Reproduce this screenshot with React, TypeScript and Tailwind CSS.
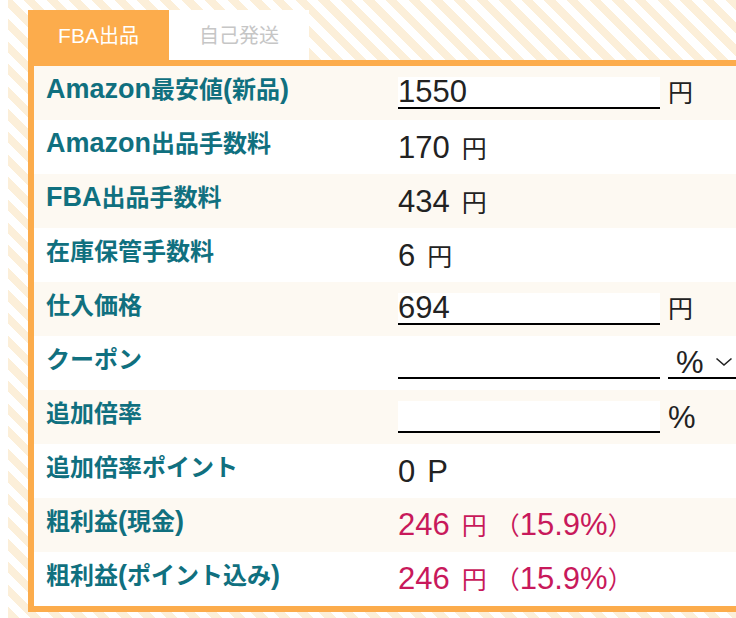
import React from "react";

const CJK_RE = /([\u3000-\u30ff\u4e00-\u9fff\uff00-\uffef]+)/;
const IS_CJK = /^[\u3000-\u30ff\u4e00-\u9fff\uff00-\uffef]+$/;

function Mix({ text, latin, cjk }: { text: string; latin: string; cjk: string }) {
  const parts = text.split(CJK_RE).filter((p) => p.length > 0);
  return (
    <>
      {parts.map((p, i) => (
        <span key={i} className={IS_CJK.test(p) ? cjk : latin}>
          {p}
        </span>
      ))}
    </>
  );
}

const LAT = "font-['Liberation_Sans',sans-serif] text-[31px] leading-none";
const JP = "font-['Noto_Sans_CJK_JP',sans-serif] text-[25px] leading-none";

function Label({ text }: { text: string }) {
  return (
    <div className="w-[364px] shrink-0 pl-[12px] pb-[6px] font-bold text-[#10707f] whitespace-nowrap">
      <Mix
        text={text}
        latin="font-['Liberation_Sans',sans-serif] text-[27px] leading-none"
        cjk="font-['Noto_Sans_CJK_JP',sans-serif] text-[24px] leading-none"
      />
    </div>
  );
}

function Input({ value }: { value: string }) {
  return (
    <input
      defaultValue={value}
      className="w-[262px] h-[32px] shrink-0 bg-white border-b-2 border-black outline-none p-0 text-[31px] leading-none font-['Liberation_Sans',sans-serif] text-[#222]"
    />
  );
}

function Plain({ num, unit, extra, red }: { num: string; unit: string; extra?: string; red?: boolean }) {
  return (
    <div className={"flex items-baseline whitespace-nowrap " + (red ? "text-[#c8195b]" : "text-[#222]")}>
      <span className={LAT}>{num}</span>
      <span className={"ml-[12px] " + (IS_CJK.test(unit) ? JP : LAT)}>{unit}</span>
      {extra && (
        <span className="ml-[8px]">
          <Mix text={extra} latin={LAT} cjk={JP} />
        </span>
      )}
    </div>
  );
}

function Row({ label, odd, children }: { label: string; odd: boolean; children: React.ReactNode }) {
  return (
    <div className={"flex items-center h-[54px] " + (odd ? "bg-[#fdf9f2]" : "bg-white")}>
      <Label text={label} />
      <div className="flex items-center">{children}</div>
    </div>
  );
}

export default function App() {
  return (
    <div className="w-[736px] h-[618px] overflow-hidden bg-white">
      <div className="ml-[8px] h-[618px] pl-[20px] pt-[10px] bg-[repeating-linear-gradient(45deg,#fcefd9_0px,#fcefd9_8px,#ffffff_8px,#ffffff_16px)]">
        <div className="flex">
          <div className="w-[141px] h-[50px] bg-[#fcac4c] text-white flex items-center justify-center">
            <Mix
              text="FBA出品"
              latin="font-['Liberation_Sans',sans-serif] text-[21px] leading-none"
              cjk="font-['Noto_Sans_CJK_JP',sans-serif] text-[20px] leading-none"
            />
          </div>
          <div className="w-[140px] h-[50px] bg-white text-[#c6c6c6] flex items-center justify-center font-['Noto_Sans_CJK_JP',sans-serif] text-[20px] leading-none">
            自己発送
          </div>
        </div>
        <div className="w-[760px] border-[6px] border-[#fcac4c] bg-white">
          <Row label="Amazon最安値(新品)" odd>
            <Input value="1550" />
            <span className={"ml-[8px] pb-[3px] text-[#222] " + JP}>円</span>
          </Row>
          <Row label="Amazon出品手数料" odd={false}>
            <Plain num="170" unit="円" />
          </Row>
          <Row label="FBA出品手数料" odd>
            <Plain num="434" unit="円" />
          </Row>
          <Row label="在庫保管手数料" odd={false}>
            <Plain num="6" unit="円" />
          </Row>
          <Row label="仕入価格" odd>
            <Input value="694" />
            <span className={"ml-[8px] pb-[3px] text-[#222] " + JP}>円</span>
          </Row>
          <Row label="クーポン" odd={false}>
            <Input value="" />
            <div className="ml-[8px] w-[90px] h-[32px] border-b-2 border-black flex items-center pl-[8px] text-[#222]">
              <span className={LAT}>%</span>
              <svg className="ml-[11px]" width="18" height="10" viewBox="0 0 18 10" fill="none">
                <path d="M1.5 1.5 L9 8 L16.5 1.5" stroke="#222" strokeWidth="1.6" />
              </svg>
            </div>
          </Row>
          <Row label="追加倍率" odd>
            <Input value="" />
            <span className={"ml-[8px] text-[#222] " + LAT}>%</span>
          </Row>
          <Row label="追加倍率ポイント" odd={false}>
            <Plain num="0" unit="P" />
          </Row>
          <Row label="粗利益(現金)" odd>
            <Plain num="246" unit="円" extra="（15.9%）" red />
          </Row>
          <Row label="粗利益(ポイント込み)" odd={false}>
            <Plain num="246" unit="円" extra="（15.9%）" red />
          </Row>
        </div>
      </div>
    </div>
  );
}
